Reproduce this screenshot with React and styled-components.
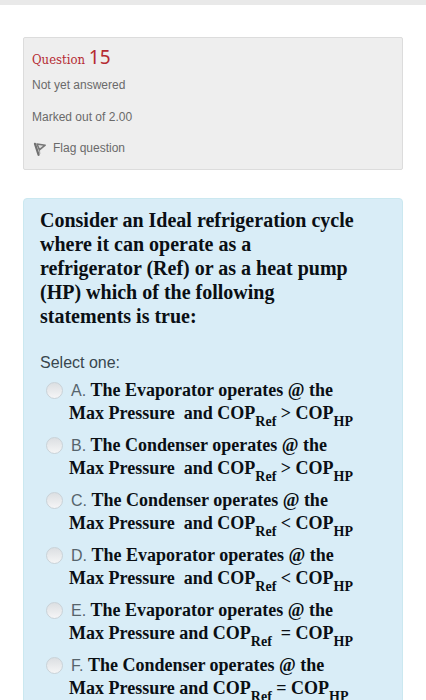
import React, { useState } from 'react';
import styled, { createGlobalStyle } from 'styled-components';

const GlobalStyle = createGlobalStyle`
  * {
    box-sizing: border-box;
  }

  body {
    margin: 0;
    background-color: #fff;
    font-family: "Liberation Sans", Arial, sans-serif;
  }
`;

const Page = styled.div`
  border-top: 5px solid #e9e9e9;
`;

const Content = styled.main`
  display: flex;
  flex-direction: column;
  gap: 28px;
  padding: 32px 23px;
`;

const InfoPanel = styled.section`
  display: flex;
  flex-direction: column;
  align-items: flex-start;
  padding: 8px 8px 10px;
  background-color: #eee;
  border: 1px solid #dcdcdc;
  border-radius: 2px;
  color: #6a6a6a;
  font-size: 12px;
`;

const QuestionTitle = styled.h3`
  margin: 0 0 2px;
  color: #b52b33;
  font-family: "DejaVu Serif Condensed", "DejaVu Serif", serif;
  font-size: 13px;
  font-weight: normal;
  line-height: 22px;
`;

const QuestionNumber = styled.span`
  font-family: "Noto Sans", sans-serif;
  font-size: 19px;
`;

const InfoLine = styled.div`
  margin-bottom: 8px;
  line-height: 24px;
`;

const FlagButton = styled.button`
  display: flex;
  align-items: center;
  gap: 6px;
  padding: 0;
  border: none;
  background: none;
  color: inherit;
  font: inherit;
  line-height: 22px;
  cursor: pointer;
`;

const QuestionPanel = styled.form`
  padding: 9px 16px;
  background-color: #d9edf7;
  border: 1px solid #cbe8f0;
  border-radius: 4px;
`;

const QuestionText = styled.p`
  margin: 0 0 23px;
  padding-right: 16px;
  color: #0a0f14;
  font-family: "Liberation Serif", "Times New Roman", serif;
  font-size: 20px;
  font-weight: bold;
  line-height: 24px;
`;

const Answers = styled.fieldset`
  min-width: 0;
  margin: 0;
  padding: 0;
  border: none;
`;

const Prompt = styled.legend`
  padding: 0;
  color: #38464e;
  font-size: 16px;
  line-height: 24px;
`;

const Option = styled.label`
  display: flex;
  align-items: flex-start;
  gap: 6px;
  padding: 4px 24px 5px 6px;
  cursor: pointer;
`;

const Radio = styled.input`
  appearance: none;
  flex: none;
  width: 17px;
  height: 17px;
  margin: 3px 0;
  border: 1px solid #c9d2d8;
  border-radius: 50%;
  background: linear-gradient(#dcdfe2, #f5f5f6);

  &:checked {
    background: radial-gradient(#444 3px, #eee 4px);
  }
`;

const OptionText = styled.span`
  color: #0a0f14;
  font-family: "Liberation Serif", "Times New Roman", serif;
  font-size: 18px;
  font-weight: bold;
  line-height: 23px;

  sub {
    font-size: 14px;
    line-height: 0;
    vertical-align: -7px;
  }
`;

const Letter = styled.span`
  padding-left: 2px;
  color: #56646c;
  font-family: "Liberation Sans", Arial, sans-serif;
  font-size: 16px;
  font-weight: normal;
`;

const FlagIcon = () => (
  <svg width="15" height="15" viewBox="0 0 15 15" fill="none" aria-hidden="true">
    <path d="M3 2.8 L6.6 13.8" stroke="#707070" strokeWidth="2.2" strokeLinecap="round" />
    <path d="M7 6 L7.8 13" stroke="#a5a5a5" strokeWidth="1.2" />
    <path
      d="M5 3 L13.2 4.2 L7.4 8.8 Z"
      fill="#ddd"
      stroke="#777"
      strokeWidth="1.6"
      strokeLinejoin="round"
    />
  </svg>
);

const options = [
  { letter: 'A', part: 'Evaporator', and: '\u00a0and', sign: ' >' },
  { letter: 'B', part: 'Condenser', and: '\u00a0and', sign: ' >' },
  { letter: 'C', part: 'Condenser', and: '\u00a0and', sign: ' <' },
  { letter: 'D', part: 'Evaporator', and: '\u00a0and', sign: ' <' },
  { letter: 'E', part: 'Evaporator', and: 'and', sign: '\u00a0 =' },
  { letter: 'F', part: 'Condenser', and: 'and', sign: ' =' },
];

const App = () => {
  const [answer, setAnswer] = useState('');
  const [flagged, setFlagged] = useState(false);

  return (
    <Page>
      <GlobalStyle />
      <Content>
        <InfoPanel>
          <QuestionTitle>
            Question <QuestionNumber>15</QuestionNumber>
          </QuestionTitle>
          <InfoLine>Not yet answered</InfoLine>
          <InfoLine>Marked out of 2.00</InfoLine>
          <FlagButton
            type="button"
            aria-pressed={flagged}
            onClick={() => setFlagged(!flagged)}
          >
            <FlagIcon />
            Flag question
          </FlagButton>
        </InfoPanel>

        <QuestionPanel>
          <QuestionText>
            Consider an Ideal refrigeration cycle where it can operate as a
            <br />
            refrigerator (Ref) or as a heat pump (HP) which of the following
            <br />
            statements is true:
          </QuestionText>
          <Answers>
            <Prompt>Select one:</Prompt>
            {options.map(({ letter, part, and, sign }) => (
              <Option key={letter}>
                <Radio
                  type="radio"
                  name="answer"
                  value={letter}
                  checked={answer === letter}
                  onChange={() => setAnswer(letter)}
                />
                <OptionText>
                  <Letter>{letter}. </Letter>
                  The {part} operates @ the
                  <br />
                  Max Pressure {and} COP<sub>Ref</sub>
                  {sign} COP<sub>HP</sub>
                </OptionText>
              </Option>
            ))}
          </Answers>
        </QuestionPanel>
      </Content>
    </Page>
  );
};

export default App;
